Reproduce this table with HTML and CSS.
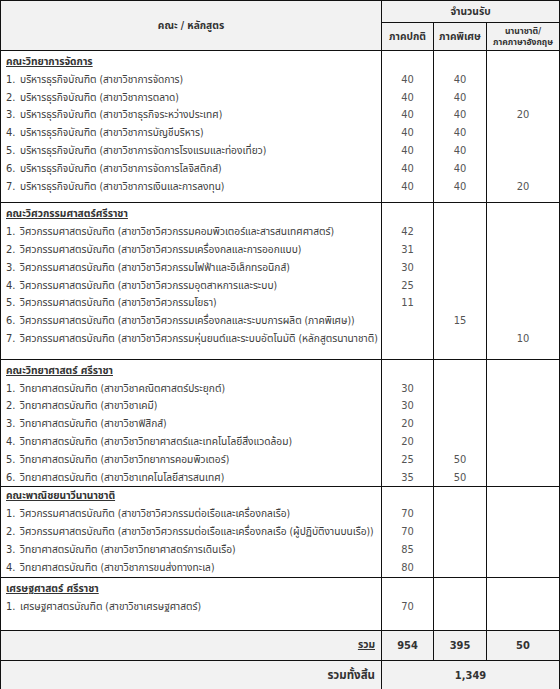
FILE: index.html
```html
<!DOCTYPE html>
<html lang="th">
<head>
<meta charset="utf-8">
<title>จำนวนรับ</title>
<link rel="stylesheet" href="styles.css">
</head>
<body>
<table class="quota">
  <colgroup>
    <col class="c-name"><col class="c-reg"><col class="c-spe"><col class="c-intl">
  </colgroup>
  <thead>
    <tr class="h1">
      <th rowspan="2" class="h-name">คณะ / หลักสูตร</th>
      <th colspan="3" class="h-group">จำนวนรับ</th>
    </tr>
    <tr class="h2">
      <th>ภาคปกติ</th>
      <th>ภาคพิเศษ</th>
      <th class="h-intl">นานาชาติ/<br>ภาคภาษาอังกฤษ</th>
    </tr>
  </thead>

  <tbody class="sec pb-a">
    <tr><td class="fac">คณะวิทยาการจัดการ</td><td></td><td></td><td></td></tr>
    <tr><td class="prog"><span class="no">1.</span>บริหารธุรกิจบัณฑิต (สาขาวิชาการจัดการ)</td><td class="n">40</td><td class="n">40</td><td class="n"></td></tr>
    <tr><td class="prog"><span class="no">2.</span>บริหารธุรกิจบัณฑิต (สาขาวิชาการตลาด)</td><td class="n">40</td><td class="n">40</td><td class="n"></td></tr>
    <tr><td class="prog"><span class="no">3.</span>บริหารธุรกิจบัณฑิต (สาขาวิชาธุรกิจระหว่างประเทศ)</td><td class="n">40</td><td class="n">40</td><td class="n">20</td></tr>
    <tr><td class="prog"><span class="no">4.</span>บริหารธุรกิจบัณฑิต (สาขาวิชาการบัญชีบริหาร)</td><td class="n">40</td><td class="n">40</td><td class="n"></td></tr>
    <tr><td class="prog"><span class="no">5.</span>บริหารธุรกิจบัณฑิต (สาขาวิชาการจัดการโรงแรมและท่องเที่ยว)</td><td class="n">40</td><td class="n">40</td><td class="n"></td></tr>
    <tr><td class="prog"><span class="no">6.</span>บริหารธุรกิจบัณฑิต (สาขาวิชาการจัดการโลจิสติกส์)</td><td class="n">40</td><td class="n">40</td><td class="n"></td></tr>
    <tr><td class="prog"><span class="no">7.</span>บริหารธุรกิจบัณฑิต (สาขาวิชาการเงินและการลงทุน)</td><td class="n">40</td><td class="n">40</td><td class="n">20</td></tr>
  </tbody>

  <tbody class="sec pb-b">
    <tr><td class="fac">คณะวิศวกรรมศาสตร์ศรีราชา</td><td></td><td></td><td></td></tr>
    <tr><td class="prog"><span class="no">1.</span>วิศวกรรมศาสตรบัณฑิต (สาขาวิชาวิศวกรรมคอมพิวเตอร์และสารสนเทศศาสตร์)</td><td class="n">42</td><td class="n"></td><td class="n"></td></tr>
    <tr><td class="prog"><span class="no">2.</span>วิศวกรรมศาสตรบัณฑิต (สาขาวิชาวิศวกรรมเครื่องกลและการออกแบบ)</td><td class="n">31</td><td class="n"></td><td class="n"></td></tr>
    <tr><td class="prog"><span class="no">3.</span>วิศวกรรมศาสตรบัณฑิต (สาขาวิชาวิศวกรรมไฟฟ้าและอิเล็กทรอนิกส์)</td><td class="n">30</td><td class="n"></td><td class="n"></td></tr>
    <tr><td class="prog"><span class="no">4.</span>วิศวกรรมศาสตรบัณฑิต (สาขาวิชาวิศวกรรมอุตสาหการและระบบ)</td><td class="n">25</td><td class="n"></td><td class="n"></td></tr>
    <tr><td class="prog"><span class="no">5.</span>วิศวกรรมศาสตรบัณฑิต (สาขาวิชาวิศวกรรมโยธา)</td><td class="n">11</td><td class="n"></td><td class="n"></td></tr>
    <tr><td class="prog"><span class="no">6.</span>วิศวกรรมศาสตรบัณฑิต (สาขาวิชาวิศวกรรมเครื่องกลและระบบการผลิต (ภาคพิเศษ))</td><td class="n"></td><td class="n">15</td><td class="n"></td></tr>
    <tr><td class="prog"><span class="no">7.</span>วิศวกรรมศาสตรบัณฑิต (สาขาวิชาวิศวกรรมหุ่นยนต์และระบบอัตโนมัติ (หลักสูตรนานาชาติ)</td><td class="n"></td><td class="n"></td><td class="n">10</td></tr>
  </tbody>

  <tbody class="sec pb-c">
    <tr><td class="fac">คณะวิทยาศาสตร์ ศรีราชา</td><td></td><td></td><td></td></tr>
    <tr><td class="prog"><span class="no">1.</span>วิทยาศาสตรบัณฑิต (สาขาวิชาคณิตศาสตร์ประยุกต์)</td><td class="n">30</td><td class="n"></td><td class="n"></td></tr>
    <tr><td class="prog"><span class="no">2.</span>วิทยาศาสตรบัณฑิต (สาขาวิชาเคมี)</td><td class="n">30</td><td class="n"></td><td class="n"></td></tr>
    <tr><td class="prog"><span class="no">3.</span>วิทยาศาสตรบัณฑิต (สาขาวิชาฟิสิกส์)</td><td class="n">20</td><td class="n"></td><td class="n"></td></tr>
    <tr><td class="prog"><span class="no">4.</span>วิทยาศาสตรบัณฑิต (สาขาวิชาวิทยาศาสตร์และเทคโนโลยีสิ่งแวดล้อม)</td><td class="n">20</td><td class="n"></td><td class="n"></td></tr>
    <tr><td class="prog"><span class="no">5.</span>วิทยาศาสตรบัณฑิต (สาขาวิชาวิทยาการคอมพิวเตอร์)</td><td class="n">25</td><td class="n">50</td><td class="n"></td></tr>
    <tr><td class="prog"><span class="no">6.</span>วิทยาศาสตรบัณฑิต (สาขาวิชาเทคโนโลยีสารสนเทศ)</td><td class="n">35</td><td class="n">50</td><td class="n"></td></tr>
  </tbody>

  <tbody class="sec pb-d">
    <tr><td class="fac">คณะพาณิชยนาวีนานาชาติ</td><td></td><td></td><td></td></tr>
    <tr><td class="prog"><span class="no">1.</span>วิศวกรรมศาสตรบัณฑิต (สาขาวิชาวิศวกรรมต่อเรือและเครื่องกลเรือ)</td><td class="n">70</td><td class="n"></td><td class="n"></td></tr>
    <tr><td class="prog"><span class="no">2.</span>วิศวกรรมศาสตรบัณฑิต (สาขาวิชาวิศวกรรมต่อเรือและเครื่องกลเรือ (ผู้ปฏิบัติงานบนเรือ))</td><td class="n">70</td><td class="n"></td><td class="n"></td></tr>
    <tr><td class="prog"><span class="no">3.</span>วิทยาศาสตรบัณฑิต (สาขาวิชาวิทยาศาสตร์การเดินเรือ)</td><td class="n">85</td><td class="n"></td><td class="n"></td></tr>
    <tr><td class="prog"><span class="no">4.</span>วิทยาศาสตรบัณฑิต (สาขาวิชาการขนส่งทางทะเล)</td><td class="n">80</td><td class="n"></td><td class="n"></td></tr>
  </tbody>

  <tbody class="sec pb-e">
    <tr><td class="fac">เศรษฐศาสตร์ ศรีราชา</td><td></td><td></td><td></td></tr>
    <tr><td class="prog"><span class="no">1.</span>เศรษฐศาสตรบัณฑิต (สาขาวิชาเศรษฐศาสตร์)</td><td class="n">70</td><td class="n"></td><td class="n"></td></tr>
  </tbody>

  <tfoot>
    <tr class="sum">
      <td class="sum-label"><u>รวม</u></td>
      <td class="sum-n">954</td>
      <td class="sum-n">395</td>
      <td class="sum-n">50</td>
    </tr>
    <tr class="grand">
      <td class="grand-label">รวมทั้งสิ้น</td>
      <td colspan="3" class="grand-n">1,349</td>
    </tr>
  </tfoot>
</table>
</body>
</html>
```

FILE: styles.css
```css
html, body {
  margin: 0;
  padding: 0;
  background: #ffffff;
}

body {
  font-family: "DejaVu Sans Condensed", "Noto Sans Thai", Tahoma, sans-serif;
  font-size: 11px;
  color: #3a3a3a;
}

.quota {
  border-collapse: collapse;
  table-layout: fixed;
  width: 559px;
  border: 1px solid #111;
}

.c-name { width: 381px; }
.c-reg  { width: 52px; }
.c-spe  { width: 53px; }
.c-intl { width: 73px; }

.quota th {
  background: #f2f2f2;
  border: 1px solid #111;
  font-weight: bold;
  font-size: 10.2px;
  color: #333;
  padding: 0;
  text-align: center;
}

.h1 th { height: 21px; }
.h2 th { height: 27px; }

.quota .h-intl {
  font-size: 8.6px;
  line-height: 11px;
}

.sec {
  border-top: 1px solid #111;
}

.sec td {
  padding: 0;
  line-height: 17.8px;
  border-left: 1px solid #111;
  border-right: 1px solid #111;
  white-space: nowrap;
  overflow: hidden;
}

.sec tr:first-child td { padding-top: 2px; }
.pb-d tr:first-child td { padding-top: 0; }

.pb-a tr:last-child td { padding-bottom: 7px; }
.pb-b tr:last-child td { padding-bottom: 11px; }
.pb-c tr:last-child td { padding-bottom: 0; }
.pb-d tr:last-child td { padding-bottom: 1px; }
.pb-e tr:last-child td { padding-bottom: 14px; }

.fac {
  padding-left: 5px !important;
  font-weight: bold;
  font-size: 10.2px;
  text-decoration: underline;
  color: #333;
}

.prog {
  padding-left: 5px !important;
  font-size: 10.2px;
  color: #3c3c3c;
}

.no {
  display: inline-block;
  width: 14px;
  font-size: 11px;
}

.n {
  text-align: center;
  color: #555;
}

tfoot td {
  background: #f2f2f2;
  border: 1px solid #111;
  font-weight: bold;
  color: #333;
  padding: 0;
}

.sum td { height: 29px; }
.grand td { height: 29px; }

.sum-label, .grand-label {
  text-align: right;
  padding-right: 6px !important;
}

.sum-label { font-size: 10.2px; }
.grand-label { font-size: 11.5px; }

.sum-n, .grand-n {
  text-align: center;
}
```
